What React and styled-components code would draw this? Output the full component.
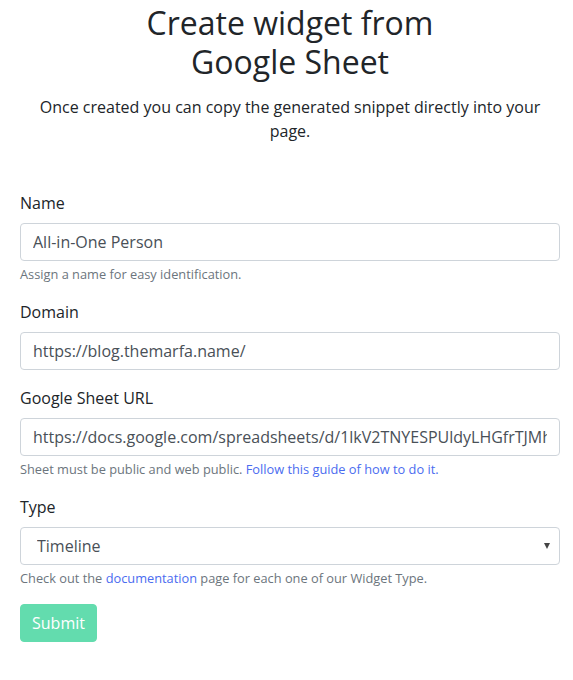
import React from 'react'
import styled, { createGlobalStyle } from 'styled-components'

const GlobalStyle = createGlobalStyle`
  * { box-sizing: border-box; }
  body {
    margin: 0;
    background: #fff;
    font-family: "Open Sans", "Noto Sans", sans-serif;
    color: #212529;
  }
`

const Page = styled.div`
  display: flex;
  flex-direction: column;
  padding: 3px 13px 38px 20px;
`

const Header = styled.header`
  display: flex;
  flex-direction: column;
  align-items: center;
  text-align: center;
  margin-bottom: 48px;
`

const Title = styled.h1`
  margin: 0 0 14px;
  font-size: 32px;
  font-weight: 400;
  line-height: 39px;
  color: #212529;
`

const Lead = styled.p`
  margin: 0;
  font-size: 16px;
  line-height: 24px;
  color: #212529;
`

const Form = styled.form`
  display: flex;
  flex-direction: column;
`

const Group = styled.div`
  display: flex;
  flex-direction: column;
  margin-bottom: 16px;
`

const Label = styled.label`
  font-size: 16px;
  line-height: 24px;
  margin-bottom: 8px;
  color: #212529;
`

const Input = styled.input`
  height: 38px;
  width: 100%;
  padding: 6px 12px;
  font-family: inherit;
  font-size: 16px;
  line-height: 24px;
  color: #495057;
  background: #fff;
  border: 1px solid #ced4da;
  border-radius: 4px;
  outline: none;
`

const SelectWrap = styled.div`
  position: relative;
`

const Select = styled.select`
  appearance: none;
  height: 38px;
  width: 100%;
  padding: 6px 16px;
  font-family: inherit;
  font-size: 16px;
  line-height: 24px;
  color: #495057;
  background: #fff;
  border: 1px solid #ced4da;
  border-radius: 4px;
  outline: none;
`

const Caret = styled.span`
  position: absolute;
  right: 10px;
  top: 16px;
  width: 0;
  height: 0;
  border-left: 3.5px solid transparent;
  border-right: 3.5px solid transparent;
  border-top: 6px solid #444;
  pointer-events: none;
`

const Help = styled.small`
  margin-top: 4px;
  font-size: 12.8px;
  line-height: 19px;
  color: #6c757d;
`

const Link = styled.a`
  color: #4b6cf0;
  text-decoration: none;
`

const Submit = styled.button`
  align-self: flex-start;
  height: 38px;
  padding: 6px 11px;
  font-family: inherit;
  font-size: 16px;
  line-height: 24px;
  color: #fff;
  background: #63dcae;
  border: 1px solid #63dcae;
  border-radius: 4px;
`

export default function App() {
  return (
    <Page>
      <GlobalStyle />
      <Header>
        <Title>Create widget from<br />Google Sheet</Title>
        <Lead>Once created you can copy the generated snippet directly into your page.</Lead>
      </Header>

      <Form onSubmit={e => e.preventDefault()}>
        <Group>
          <Label>Name</Label>
          <Input defaultValue="All-in-One Person" />
          <Help>Assign a name for easy identification.</Help>
        </Group>

        <Group>
          <Label>Domain</Label>
          <Input defaultValue="https://blog.themarfa.name/" />
        </Group>

        <Group>
          <Label>Google Sheet URL</Label>
          <Input defaultValue="https://docs.google.com/spreadsheets/d/1lkV2TNYESPUldyLHGfrTJMhXqkDw3sGJ0bPzE/edit" />
          <Help>Sheet must be public and web public. <Link href="#">Follow this guide of how to do it.</Link></Help>
        </Group>

        <Group>
          <Label>Type</Label>
          <SelectWrap>
            <Select defaultValue="timeline">
              <option value="timeline">Timeline</option>
            </Select>
            <Caret />
          </SelectWrap>
          <Help>Check out the <Link href="#">documentation</Link> page for each one of our Widget Type.</Help>
        </Group>

        <Submit type="submit">Submit</Submit>
      </Form>
    </Page>
  )
}
